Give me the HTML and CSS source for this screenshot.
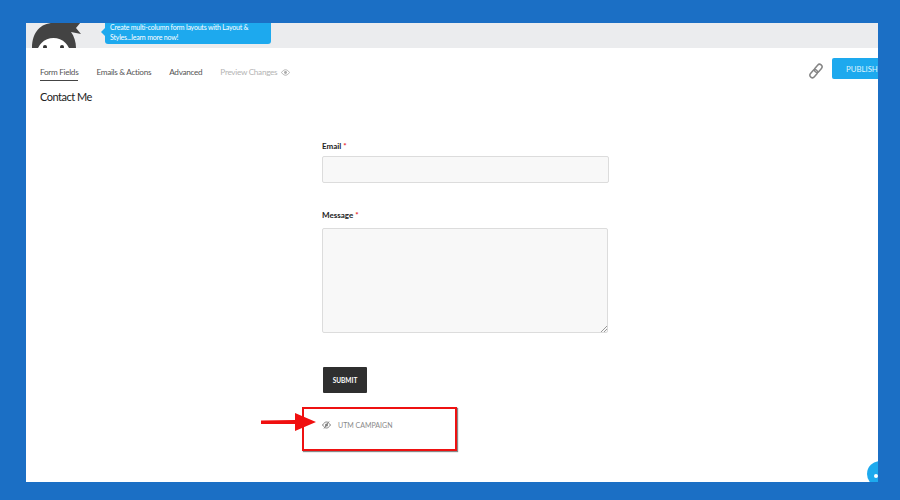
FILE: index.html
```html
<!DOCTYPE html>
<html lang="en">
<head>
<meta charset="utf-8">
<title>Contact Me</title>
<link rel="stylesheet" href="styles.css">
</head>
<body>
<div class="panel">
  <header class="topbar">
    <svg class="ninja" width="52" height="25" viewBox="0 0 52 25">
      <path d="M1 25C1 9 10 0 22 0h15l13-1-5 6 5 6-10-2c3 4 5 10 5 16z" fill="#434343"/>
      <circle cx="22.5" cy="32" r="17" fill="#fff"/>
      <circle cx="14" cy="24" r="2" fill="#333"/>
      <circle cx="31" cy="24" r="2" fill="#333"/>
    </svg>
    <div class="bubble">Create multi-column form layouts with Layout &amp; Styles...learn more now!</div>
  </header>
  <nav class="tabs">
    <a class="tab tab-active">Form Fields</a>
    <a class="tab">Emails &amp; Actions</a>
    <a class="tab">Advanced</a>
    <a class="tab tab-muted">Preview Changes
      <svg class="eye" width="9" height="7" viewBox="0 0 20 14"><path d="M1 7c3-4 6-6 9-6s6 2 9 6c-3 4-6 6-9 6S4 11 1 7z" fill="none" stroke="#a9a9a9" stroke-width="2"/><circle cx="10" cy="7" r="3.2" fill="#a9a9a9"/></svg>
    </a>
    <svg class="link" width="14" height="16" viewBox="0 0 14 16"><g fill="none" stroke="#858585" stroke-width="1.5" transform="rotate(40 7 8)"><rect x="4.5" y="0" width="5" height="9" rx="2.5"/><rect x="4.5" y="7" width="5" height="9" rx="2.5"/></g></svg>
    <button class="publish">PUBLISH</button>
  </nav>
  <h1 class="title">Contact Me</h1>
  <form class="form">
    <label class="label label-email">Email <span class="req">*</span></label>
    <div class="input"></div>
    <label class="label label-message">Message <span class="req">*</span></label>
    <div class="textarea">
      <svg class="grip" width="6" height="6" viewBox="0 0 6 6"><path d="M0 6 6 0M3 6l3-3" stroke="#999" stroke-width="1"/></svg>
    </div>
    <button class="submit" type="button">SUBMIT</button>
    <div class="utm">
      <svg class="eye-off" width="9" height="8" viewBox="0 0 18 16"><path d="M1 8c3-4 5-6 8-6s5 2 8 6c-3 4-5 6-8 6s-5-2-8-6z" fill="none" stroke="#808080" stroke-width="2"/><circle cx="9" cy="8" r="3" fill="#808080"/><path d="M4 15 14 1" stroke="#808080" stroke-width="2"/></svg>
      <span>UTM CAMPAIGN</span>
    </div>
  </form>
  <div class="highlight"></div>
  <svg class="arrow" width="56" height="26" viewBox="0 0 56 26"><path d="M0 10.5 34 10V3l21 9-21 9v-7L0 14z" fill="#f00f0f"/></svg>
  <div class="help"></div>
</div>
</body>
</html>
```
FILE: styles.css
```css
* { box-sizing: border-box; }
html, body { height: 100%; }
body {
  margin: 0;
  background: #1b6fc5;
  padding: 23px 22px 18px 26px;
  font-family: Lato, "Open Sans", sans-serif;
  overflow: hidden;
}
.panel {
  position: relative;
  height: 459px;
  background: #fff;
  overflow: hidden;
}
.topbar {
  display: flex;
  align-items: flex-start;
  gap: 22px;
  height: 25px;
  background: #ebecee;
  padding-left: 5px;
}
.ninja { flex: none; }
.bubble {
  position: relative;
  width: 166px;
  height: 21px;
  padding: 0 5px;
  background: #1da9ee;
  border-radius: 0 0 3px 3px;
  color: #fff;
  font-size: 7px;
  letter-spacing: -0.2px;
  line-height: 9.5px;
}
.bubble::before {
  content: "";
  position: absolute;
  left: -4px;
  top: 5px;
  border: 4px solid transparent;
  border-left: 0;
  border-right-color: #1da9ee;
}
.tabs {
  display: flex;
  align-items: center;
  height: 41px;
  padding: 6px 0 0 14px;
  font-size: 8.2px;
  letter-spacing: -0.3px;
  color: #555;
}
.tab { margin-right: 18px; padding: 5px 0 3px; border-bottom: 1px solid transparent; white-space: nowrap; }
.tab-active { border-bottom-color: #444; }
.tab-muted { color: #b4b4b4; }
.eye { vertical-align: -1px; margin-left: 2px; }
.link { margin: -2px 9px 0 auto; }
.publish {
  width: 60px;
  height: 21px;
  margin: -6px -14px 0 0;
  padding: 0 0 0 14px;
  text-align: left;
  border: 0;
  border-radius: 2px;
  background: #1da9ee;
  color: #dff3fd;
  font: 7.8px Lato, "Open Sans", sans-serif;
}
.title {
  margin: 0 0 0 14px;
  font-size: 11px;
  font-weight: 400;
  letter-spacing: -0.5px;
  line-height: 15px;
  color: #222;
}
.form {
  width: 287px;
  margin: 36px 0 0 296px;
  display: flex;
  flex-direction: column;
  align-items: flex-start;
}
.label { font-size: 8px; font-weight: 700; line-height: 12px; color: #222; }
.req { color: #e8212b; }
.input {
  width: 287px;
  height: 27px;
  margin-top: 4px;
  background: #f8f8f8;
  border: 1px solid #dcdcdc;
  border-radius: 2px;
}
.label-message { margin-top: 26px; }
.textarea {
  position: relative;
  width: 286px;
  height: 105px;
  margin-top: 7px;
  background: #f8f8f8;
  border: 1px solid #dcdcdc;
  border-radius: 2px;
}
.grip { position: absolute; right: 0; bottom: 0; }
.submit {
  width: 44px;
  height: 26px;
  margin: 34px 0 0 1px;
  border: 0;
  border-radius: 1px;
  background: #2f2f2f;
  color: #fff;
  font: 700 6.5px Lato, "Open Sans", sans-serif;
}
.utm {
  display: flex;
  align-items: center;
  gap: 7px;
  margin-top: 26px;
  font-size: 7px;
  color: #8a8a8a;
  line-height: 12px;
}
.highlight {
  position: absolute;
  left: 276px;
  top: 384px;
  width: 155px;
  height: 44px;
  border: 2px solid #ee1111;
  box-shadow: 1px 1px 1px #888;
}
.arrow { position: absolute; left: 235px; top: 387px; }
.help {
  position: absolute;
  right: -15px;
  bottom: -5px;
  width: 26px;
  height: 26px;
  border-radius: 50%;
  background: #1da9ee;
}
.help::after {
  content: "";
  position: absolute;
  left: 7px;
  top: 13px;
  width: 4px;
  height: 4px;
  background: #fff;
  border-radius: 50%;
}
```
